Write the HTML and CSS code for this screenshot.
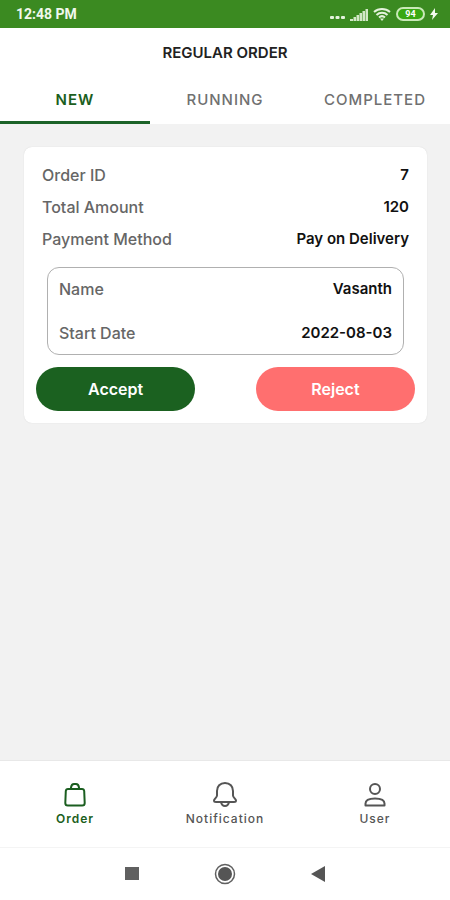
FILE: index.html
```html
<!DOCTYPE html>
<html lang="en">
<head>
    <meta charset="UTF-8">
    <meta name="viewport" content="width=device-width, initial-scale=1.0">
    <title>Regular Order</title>
    <link rel="stylesheet" href="styles.css">
</head>
<body>
    <div class="status-bar">
        <span class="time">12:48 PM</span>
        <div class="status-icons">
            <svg width="15" height="4" viewBox="0 0 15 4" fill="#e4f2dc">
                <rect x="0" y="0" width="4" height="3" rx="1"/>
                <rect x="5.500" y="0" width="4" height="3" rx="1"/>
                <rect x="11" y="0" width="4" height="3" rx="1"/>
            </svg>
            <svg class="signal" width="18" height="13" viewBox="0 0 18 13" fill="#d3e8c8">
                <path d="M0 11h3v2H0zM3.500 9h2.500v4H3.500zM6.500 7H9v6H6.500zM9.500 5H12v8H9.500zM12.500 3H15v10h-2.500zM15.500 1H18v12h-2.500z"/>
            </svg>
            <svg class="wifi" width="18" height="14" viewBox="0 0 18 14" fill="none" stroke="#e4f2dc" stroke-width="2">
                <path d="M1 5a12 12 0 0 1 16 0M3.500 8a8 8 0 0 1 11 0M6 10.500a4.500 4.500 0 0 1 6 0"/>
                <path d="M7 11.500h4L9 14z" fill="#e4f2dc" stroke="none"/>
            </svg>
            <span class="battery">94</span>
            <svg width="8" height="12" viewBox="0 0 8 12" fill="#f3faef">
                <path d="M5 0 0 7h3l-1 5 6-7H5z"/>
            </svg>
        </div>
    </div>

    <header class="header">
        <h1>REGULAR ORDER</h1>
    </header>

    <div class="tabs" role="tablist">
        <button class="tab active" role="tab" aria-selected="true">NEW</button>
        <button class="tab" role="tab" aria-selected="false">RUNNING</button>
        <button class="tab" role="tab" aria-selected="false">COMPLETED</button>
    </div>

    <main class="content">
        <div class="card">
            <dl class="summary">
                <div class="row"><dt>Order ID</dt><dd>7</dd></div>
                <div class="row"><dt>Total Amount</dt><dd>120</dd></div>
                <div class="row"><dt>Payment Method</dt><dd>Pay on Delivery</dd></div>
            </dl>
            <dl class="details">
                <div class="row"><dt>Name</dt><dd>Vasanth</dd></div>
                <div class="row"><dt>Start Date</dt><dd>2022-08-03</dd></div>
            </dl>
            <div class="actions">
                <button class="btn accept">Accept</button>
                <button class="btn reject">Reject</button>
            </div>
        </div>
    </main>

    <nav class="bottom-nav">
        <a href="#order" class="nav-item active">
            <svg width="24" height="26" viewBox="0 0 24 26" fill="none" stroke="currentColor" stroke-width="2" stroke-linejoin="round">
                <path d="M5 8h14q2 0 2.200 2l.5 12q0 2.500-2.500 2.500H4.800q-2.500 0-2.500-2.500l.5-12Q3 8 5 8z"/>
                <path d="M8 8V6.500q.5-3.500 3-3.500h2q2.500 0 3 3.500V8"/>
            </svg>
            <span>Order</span>
        </a>
        <a href="#notification" class="nav-item">
            <svg width="26" height="26" viewBox="0 0 26 26" fill="none" stroke="currentColor" stroke-width="2" stroke-linejoin="round">
                <path d="M13 2C8 2 5 5.500 5 10v4.500c0 2-3 3.500-3 5 0 1 1 1.500 2 1.500h18c1 0 2-.5 2-1.500 0-1.500-3-3-3-5V10c0-4.500-3-8-8-8z"/>
                <path d="M9 21c.5 2.500 2 4 4 4s3.500-1.500 4-4"/>
            </svg>
            <span>Notification</span>
        </a>
        <a href="#user" class="nav-item">
            <svg width="24" height="26" viewBox="0 0 24 26" fill="none" stroke="currentColor" stroke-width="2" stroke-linejoin="round">
                <circle cx="12" cy="8" r="5"/>
                <path d="M2.500 24.500v-2c0-3.500 3-5 9.500-5s9.500 1.500 9.500 5v2z"/>
            </svg>
            <span>User</span>
        </a>
    </nav>

    <div class="system-nav">
        <button aria-label="Recent apps">
            <svg width="14" height="14" viewBox="0 0 14 14"><rect width="14" height="13" fill="#606060"/></svg>
        </button>
        <button aria-label="Home">
            <svg width="22" height="22" viewBox="0 0 22 22">
                <circle cx="11" cy="11" r="9.500" fill="none" stroke="#606060" stroke-width="1.500"/>
                <circle cx="11" cy="11" r="7" fill="#555"/>
            </svg>
        </button>
        <button aria-label="Back">
            <svg width="14" height="16" viewBox="0 0 14 16"><path d="M14 0v16L0 8z" fill="#555"/></svg>
        </button>
    </div>
</body>
</html>
```
FILE: styles.css
```css
* {
    padding: 0;
    margin: 0;
    box-sizing: border-box;
}
body {
    min-height: 100vh;
    display: flex;
    flex-direction: column;
    background: #f2f2f2;
    font-family: Inter, "Open Sans", sans-serif;
}
button {
    border: none;
    background: none;
    font-family: inherit;
    cursor: pointer;
}
.status-bar {
    height: 28px;
    padding: 0 12px 0 16px;
    display: flex;
    align-items: center;
    justify-content: space-between;
    background: #3b8a21;
    color: #f0f8ec;
}
.time {
    font-family: Roboto, sans-serif;
    font-size: 14px;
    font-weight: 700;
}
.status-icons {
    display: flex;
    align-items: center;
    gap: 5px;
}
.status-icons svg:first-child {
    margin-top: 8px;
}
.battery {
    width: 29px;
    height: 14px;
    border: 2px solid #c9e8b8;
    border-radius: 7px;
    background: #38a813;
    color: #fff;
    font-family: Roboto, sans-serif;
    font-size: 9px;
    font-weight: 700;
    line-height: 10px;
    text-align: center;
}
.header {
    height: 48px;
    display: flex;
    align-items: center;
    justify-content: center;
    background: #fff;
}
h1 {
    font-size: 15px;
    font-weight: 600;
    color: #222;
}
.tabs {
    display: grid;
    grid-template-columns: repeat(3, 1fr);
    background: #fff;
}
.tab {
    height: 48px;
    border-bottom: 3px solid transparent;
    padding-top: 2px;
    font-size: 15px;
    font-weight: 500;
    letter-spacing: 1px;
    color: #707070;
}
.tab.active {
    border-bottom-color: #1c6328;
    font-weight: 600;
    color: #1b5e20;
}
.content {
    flex: 1;
    padding: 23px 23px 23px 24px;
}
.card {
    padding: 12px;
    border-radius: 8px;
    background: #fff;
    box-shadow: 0 0 1px #ccc;
}
.row {
    display: flex;
    justify-content: space-between;
    align-items: center;
    font-size: 16px;
    line-height: 20px;
}
dt {
    font-weight: 500;
    color: #666;
}
dd {
    font-size: 15px;
    font-weight: 600;
    color: #111;
}
.summary {
    display: grid;
    gap: 12px;
    padding: 6px;
}
.details {
    display: grid;
    gap: 24px;
    margin: 12px 11px;
    padding: 11px;
    border: 1px solid #b0b0b0;
    border-radius: 12px;
}
.actions {
    display: flex;
    justify-content: space-between;
}
.btn {
    width: 42%;
    height: 44px;
    border-radius: 22px;
    color: #fff;
    font-size: 16px;
    font-weight: 600;
}
.accept {
    background: #1b6120;
}
.reject {
    background: #ff6f6f;
}
.bottom-nav {
    display: grid;
    grid-template-columns: repeat(3, 1fr);
    height: 87px;
    border-top: 1px solid #e8e8e8;
    background: #fff;
}
.nav-item {
    display: flex;
    flex-direction: column;
    align-items: center;
    justify-content: center;
    gap: 4px;
    color: #555;
    font-size: 12px;
    font-weight: 500;
    line-height: 16px;
    letter-spacing: 1px;
    text-decoration: none;
}
.nav-item.active {
    color: #1b5e20;
    font-weight: 600;
}
.system-nav {
    height: 53px;
    display: flex;
    align-items: center;
    justify-content: center;
    gap: 75px;
    border-top: 1px solid #f4f4f4;
    background: #fff;
}
.system-nav button {
    display: flex;
}
```
